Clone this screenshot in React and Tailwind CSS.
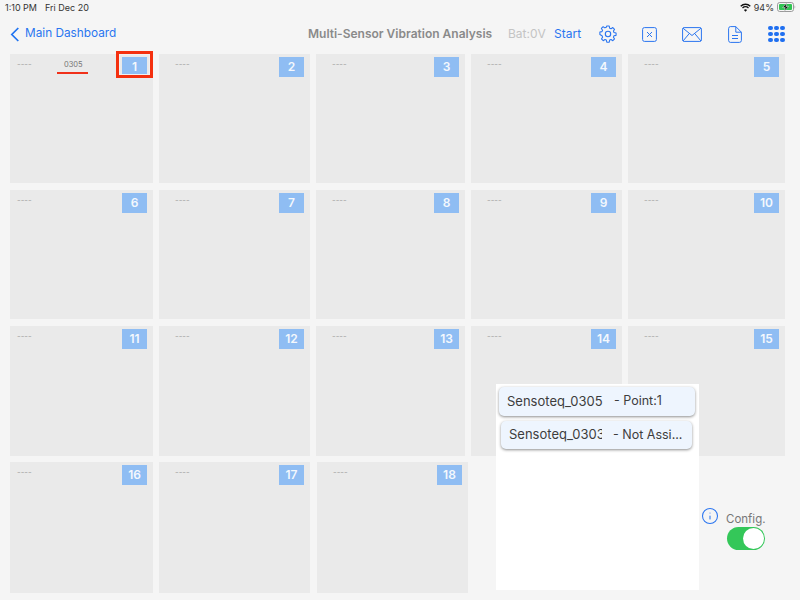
import { Info } from 'lucide-react';

const rows = [
  { h: 'h-[129px]', ids: [1, 2, 3, 4, 5] },
  { h: 'h-[129px]', ids: [6, 7, 8, 9, 10] },
  { h: 'h-[130px]', ids: [11, 12, 13, 14, 15] },
  { h: 'h-[131px]', ids: [16, 17, 18] },
];

const widths = ['w-[143px]', 'w-[151px]', 'w-[149px]', 'w-[151px]', 'w-[157px]'];

const StatusBar = () => (
  <div className="flex h-[14px] items-center justify-between pl-[5px] pr-[4px] text-[9px] leading-none text-[#333]">
    <div className="flex gap-[8px]">
      <span>1:10 PM</span>
      <span>Fri Dec 20</span>
    </div>
    <div className="flex items-center gap-[3px]">
      <svg width="11" height="9" viewBox="0 0 11 9" fill="none" stroke="#111" strokeWidth="1.4">
        <path d="M.7 3.2a7 7 0 0 1 9.6 0" />
        <path d="M2.5 5a4.4 4.4 0 0 1 6 0" />
        <path d="M5.5 8.8 3.9 6.9a2.4 2.4 0 0 1 3.2 0z" fill="#111" stroke="none" />
      </svg>
      <span>94%</span>
      <svg width="19" height="10" viewBox="0 0 19 10">
        <rect x="0.5" y="0.5" width="16" height="9" rx="2.2" fill="none" stroke="#9a9a9a" />
        <rect x="2" y="2" width="13" height="6" rx="1" fill="#30c452" />
        <path d="M17.6 3.5c.8.3.8 2.7 0 3z" fill="#9a9a9a" />
        <path d="M9.8.8 5.6 5.6h2.6L7.4 9.2l4.2-4.8H9z" fill="#111" stroke="#f5f5f5" strokeWidth=".5" />
      </svg>
    </div>
  </div>
);

const NavBar = () => (
  <div className="relative flex h-[40px] items-center text-[#2a75f0]">
    <svg className="ml-[10px]" width="10" height="15" viewBox="0 0 10 15" fill="none" stroke="#1f73f1" strokeWidth="1.7">
      <path d="M8.3 1 1.800 7.500l6.500 6.500" />
    </svg>
    <span className="ml-[5px] w-[91px] whitespace-nowrap text-[11.8px]">Main Dashboard</span>
    <span className="ml-[192px] w-[185px] whitespace-nowrap text-[12px] font-semibold text-[#8a8a8a]">Multi-Sensor Vibration Analysis</span>
    <span className="ml-[15px] w-[37px] text-[12px] text-[#c4c4c4]">Bat:0V</span>
    <span className="ml-[9px] w-[27px] text-[12px]">Start</span>
    <svg className="ml-[18px]" width="18" height="18" viewBox="0 0 24 24" fill="none" stroke="#2a75f0" strokeWidth="1.5" strokeLinejoin="round">
      <path d="M10.300 2h3.400l.6 2.900 1.900.8 2.500-1.600 2.400 2.400-1.600 2.500.8 1.900 2.900.6v3.400l-2.900.6-.8 1.900 1.600 2.500-2.400 2.400-2.500-1.600-1.900.8-.6 2.900h-3.400l-.6-2.900-1.900-.8-2.500 1.600-2.400-2.400 1.600-2.500-.8-1.900L.7 13.700v-3.400l2.900-.6.8-1.900-1.600-2.500 2.400-2.400 2.500 1.600 1.900-.8z" transform="translate(.5 -.5) scale(.96)" />
      <circle cx="12" cy="12" r="3.600" />
    </svg>
    <svg className="ml-[25px]" width="15" height="15" viewBox="0 0 15 15" fill="none" stroke="#2a75f0" strokeWidth="1">
      <rect x=".6" y=".6" width="13.800" height="13.800" rx="1.800" />
      <path d="m5 5 5 5M10 5l-5 5" />
    </svg>
    <svg className="ml-[25px]" width="20" height="15" viewBox="0 0 20 15" fill="none" stroke="#2a75f0" strokeWidth="1">
      <rect x=".6" y=".6" width="18.800" height="13.800" rx="1.500" />
      <path d="m1 1.200 9 7.300 9-7.300M1 14l6.300-7.500M19 14l-6.300-7.500" />
    </svg>
    <svg className="ml-[26px]" width="14" height="17" viewBox="0 0 14 17" fill="none" stroke="#2a75f0" strokeWidth="1">
      <path d="M2.300.6h5.500l5.600 5.600v8.200a2 2 0 0 1-2 2H2.300a2 2 0 0 1-1.700-2V2.600a2 2 0 0 1 1.700-2z" />
      <path d="M7.800.6v5.600h5.600M4 9.500h6M4 12.500h6" />
    </svg>
    <div className="ml-[26px] grid grid-cols-3 gap-[1.500px]">
      {Array.from({ length: 9 }, (_, i) => (
        <span key={i} className="size-[4.500px] rounded-full bg-[#1f6ff0]" />
      ))}
    </div>
  </div>
);

const Cell = ({ id, width, first, last }) => (
  <div className={`relative ${last ? 'ml-px w-[151px]' : width} bg-[#eaeaea] ${first ? 'pl-[7px]' : 'pl-[16px]'} pt-[5px] text-[8px] leading-[10px] text-[#a5a5a5]`}>
    <span>----</span>
    <span className="absolute right-[6px] top-[3px] flex h-[20px] w-[25px] items-center justify-center bg-[#8fbdf3] pb-px text-[12px] font-semibold text-[#f4f8fd]">
      {id}
    </span>
    {id === 1 && (
      <>
        <span className="absolute left-[54px] top-[6px] text-[7.5px] text-[#777]">0305</span>
        <span className="absolute left-[47px] top-[18px] h-[2px] w-[31px] bg-[#f0311a]" />
        <span className="absolute -top-[3px] right-0 h-[27px] w-[37px] border-[3px] border-[#f4300f] shadow-[inset_0_0_0_1px_#f0f0f0]" />
      </>
    )}
  </div>
);

const SensorRow = ({ name, point, inset, nameWidth }) => (
  <div className={`flex items-center rounded-[5px] bg-[#eef5fe] text-[12.5px] text-[#3d3d3d] shadow-[0_1px_3px_rgba(0,0,0,0.45)] ${inset}`}>
    <span className={`overflow-hidden whitespace-nowrap text-[13px] ${nameWidth}`}>{name}</span>
    <span className="ml-[11px] whitespace-nowrap">{point}</span>
  </div>
);

export default function App() {
  return (
    <div className="relative h-[600px] w-[800px] overflow-hidden bg-[#f5f5f5] font-['Inter','Liberation_Sans',sans-serif]">
      <StatusBar />
      <NavBar />
      <div className="flex flex-col pl-[10px]">
        {rows.map((row, r) => (
          <div key={r} className={`flex gap-[6px] ${row.h} ${r === 0 ? '' : r === 3 ? 'mt-[6px]' : 'mt-[7px]'}`}>
            {row.ids.map((id, c) => (
              <Cell key={id} id={id} width={widths[c]} first={c === 0} last={id === 18} />
            ))}
          </div>
        ))}
      </div>

      <div className="absolute left-[496px] top-[384px] h-[206px] w-[203px] bg-white">
        <SensorRow name="Sensoteq_0305" point="- Point:1" nameWidth="w-[96px]" inset="ml-[3px] mr-[4px] mt-[3px] h-[29px] pl-[8px]" />
        <SensorRow name="Sensoteq_0303" point="- Not Assi..." nameWidth="w-[93px]" inset="ml-[5px] mr-[7px] mt-[5px] h-[28px] pl-[8px]" />
      </div>

      <div className="absolute left-[701px] top-[507px] text-[#2a75f0]">
        <Info size={18} strokeWidth={1.4} />
      </div>
      <span className="absolute left-[726px] top-[512px] text-[11.5px] leading-[14px] text-[#777]">Config.</span>
      <div className="absolute left-[727px] top-[527px] flex h-[23px] w-[38px] items-center justify-end rounded-full bg-[#34c759] pr-px">
        <span className="size-[21px] rounded-full bg-white" />
      </div>
    </div>
  );
}
